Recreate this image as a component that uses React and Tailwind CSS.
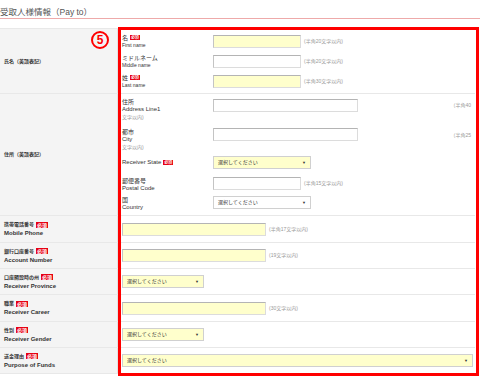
import React from 'react';

const FONT = "font-['Liberation_Sans','Noto_Sans_CJK_JP',sans-serif]";

const Req = ({ small }) => (
  <span className={small
    ? 'inline-block bg-[#e60012] text-white font-bold text-[4px] leading-[5px] px-[1px] ml-[2px]'
    : 'inline-block bg-[#e60012] text-white font-bold text-[5px] leading-[6px] px-[1px] ml-[2px]'}>
    必須
  </span>
);

const Input = ({ w, yellow }) => (
  <div className={`h-[13px] border border-[#dcdcdc] border-t-[#b4b4b4] border-l-[#c4c4c4] ${w} ${yellow ? 'bg-[#ffffcc]' : 'bg-white'}`} />
);

const Select = ({ w, yellow }) => (
  <div className={`h-[13px] border border-[#d0d0d0] flex items-center justify-between px-[4px] text-[5px] text-[#333] ${w} ${yellow ? 'bg-[#ffffcc]' : 'bg-white'}`}>
    <span>選択してください</span>
    <span className="text-[4px]">▼</span>
  </div>
);

const Note = ({ children, top }) => (
  <span className={`text-[5px] leading-[7px] text-[#999] ml-[3px] ${top ? 'mt-[3px]' : ''}`}>{children}</span>
);

function SubLabel({ jp, en, req, extra }) {
  return (
    <div className="w-[91px] shrink-0 text-[#333]">
      <div className="text-[6px] leading-[8px] flex items-center">{jp}{req && <Req small />}</div>
      <div className="text-[5px] leading-[7px]">{en}</div>
      {extra && <div className="text-[5px] leading-[8px] text-[#999]">{extra}</div>}
    </div>
  );
}

function SideLabel({ jp, en, req }) {
  return (
    <div className="w-[118px] shrink-0 bg-[#f4f4f4] border-r border-[#e2e2e2] pl-[4px] flex flex-col justify-center text-[#333] font-bold">
      <div className="text-[5px] leading-[9px] flex items-center">{jp}{req && <Req />}</div>
      {en && <div className="text-[6px] leading-[9px]">{en}</div>}
    </div>
  );
}

function Row({ h, jp, en, children }) {
  return (
    <div className={`flex border-b border-[#e8e8e8] ${h}`}>
      <SideLabel jp={jp} en={en} req />
      <div className="flex-1 flex items-center pl-[4px]">{children}</div>
    </div>
  );
}

export default function App() {
  return (
    <div className={`relative w-[480px] h-[388px] overflow-hidden bg-white ${FONT}`}>
      {/* Title */}
      <div className="pt-[8px] pb-[1px] border-b border-[#eeaaaa] text-[8.5px] leading-[9px] text-[#555]">
        受取人様情報（Pay to）
      </div>

      <div className="mt-[9px] w-[475px] border-t border-[#e8e8e8]">
        {/* 氏名 */}
        <div className="flex border-b border-[#e8e8e8] h-[65px]">
          <SideLabel jp="氏名（英語表記）" />
          <div className="flex-1 pl-[4px] pt-[2px]">
            <div className="h-[20px] flex items-center">
              <SubLabel jp="名" en="First name" req />
              <Input w="w-[88px]" yellow />
              <Note>(半角20文字以内)</Note>
            </div>
            <div className="h-[20px] flex items-center">
              <SubLabel jp="ミドルネーム" en="Middle name" />
              <Input w="w-[88px]" />
              <Note>(半角20文字以内)</Note>
            </div>
            <div className="h-[20px] flex items-center">
              <SubLabel jp="姓" en="Last name" req />
              <Input w="w-[88px]" yellow />
              <Note>(半角30文字以内)</Note>
            </div>
          </div>
        </div>

        {/* 住所 */}
        <div className="flex border-b border-[#e8e8e8] h-[122px]">
          <SideLabel jp="住所（英語表記）" />
          <div className="flex-1 pl-[4px] pt-[4px] pr-[4px]">
            <div className="h-[30px] flex items-start">
              <SubLabel jp="住所" en={<span className="text-[6px]">Address Line1</span>} extra="文字以内)" />
              <div className="mt-[1px]"><Input w="w-[145px]" /></div>
              <span className="ml-auto mt-[4px] text-[5px] leading-[7px] text-[#999]">（半角40</span>
            </div>
            <div className="h-[28px] flex items-start">
              <SubLabel jp="都市" en={<span className="text-[6px]">City</span>} extra="文字以内)" />
              <Input w="w-[145px]" />
              <span className="ml-auto mt-[4px] text-[5px] leading-[7px] text-[#999]">（半角25</span>
            </div>
            <div className="h-[21px] flex items-start">
              <div className="w-[91px] shrink-0 h-[13px] flex items-center text-[6px] text-[#333]">
                Receiver State<Req small />
              </div>
              <Select w="w-[98px]" yellow />
            </div>
            <div className="h-[19px] flex items-start">
              <SubLabel jp="郵便番号" en={<span className="text-[6px]">Postal Code</span>} />
              <Input w="w-[88px]" />
              <Note top>(半角15文字以内)</Note>
            </div>
            <div className="h-[19px] flex items-start">
              <SubLabel jp="国" en={<span className="text-[6px]">Country</span>} />
              <Select w="w-[98px]" />
            </div>
          </div>
        </div>

        <Row h="h-[27px]" jp="携帯電話番号" en="Mobile Phone">
          <Input w="w-[144px]" yellow />
          <Note>(半角17文字以内)</Note>
        </Row>
        <Row h="h-[26px]" jp="銀行口座番号" en="Account Number">
          <Input w="w-[144px]" yellow />
          <Note>(19文字以内)</Note>
        </Row>
        <Row h="h-[26px]" jp="口座開設時の州" en="Receiver Province">
          <Select w="w-[82px]" yellow />
        </Row>
        <Row h="h-[27px]" jp="職業" en="Receiver Career">
          <Input w="w-[144px]" yellow />
          <Note>(30文字以内)</Note>
        </Row>
        <Row h="h-[26px]" jp="性別" en="Receiver Gender">
          <Select w="w-[82px]" yellow />
        </Row>
        <Row h="h-[26px]" jp="送金理由" en="Purpose of Funds">
          <div className="flex-1 pr-[2px]"><Select w="w-full" yellow /></div>
        </Row>
      </div>

      {/* annotation overlay */}
      <div className="absolute left-[118px] top-[27px] w-[361px] h-[349px] border-[3px] border-[#ff0000] pointer-events-none" />
      <div className="absolute left-[91px] top-[31px] w-[18px] h-[18px] rounded-full border-2 border-[#ff0000] flex items-center justify-center text-[#ff0000] font-bold text-[12px] leading-none">
        5
      </div>
    </div>
  );
}
